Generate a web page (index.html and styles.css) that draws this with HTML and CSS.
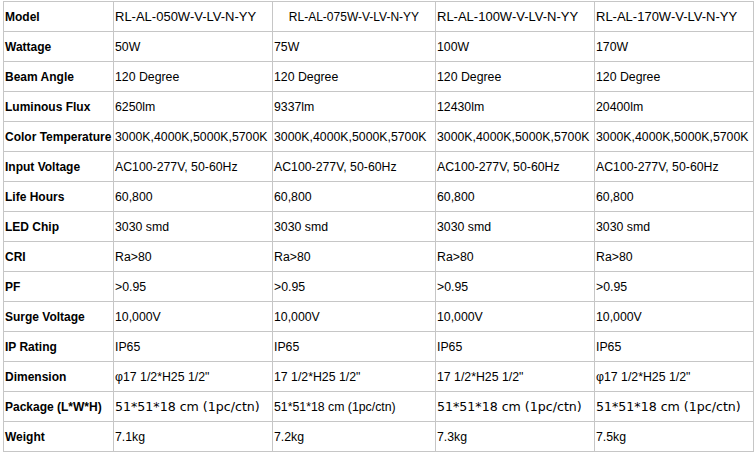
FILE: index.html
```html
<!DOCTYPE html>
<html>
<head>
<meta charset="utf-8">
<link rel="stylesheet" href="styles.css">
</head>
<body>
<table class="spec">
<colgroup>
<col class="c0"><col class="c1"><col class="c2"><col class="c3"><col class="c4">
</colgroup>
<tbody>
<tr><th>Model</th><td class="hd">RL-AL-050W-V-LV-N-YY</td><td class="hd2">RL-AL-075W-V-LV-N-YY</td><td class="hd">RL-AL-100W-V-LV-N-YY</td><td class="hd">RL-AL-170W-V-LV-N-YY</td></tr>
<tr><th>Wattage</th><td>50W</td><td>75W</td><td>100W</td><td>170W</td></tr>
<tr><th>Beam Angle</th><td>120 Degree</td><td>120 Degree</td><td>120 Degree</td><td>120 Degree</td></tr>
<tr><th>Luminous Flux</th><td>6250lm</td><td>9337lm</td><td>12430lm</td><td>20400lm</td></tr>
<tr><th>Color Temperature</th><td>3000K,4000K,5000K,5700K</td><td>3000K,4000K,5000K,5700K</td><td>3000K,4000K,5000K,5700K</td><td>3000K,4000K,5000K,5700K</td></tr>
<tr><th>Input Voltage</th><td>AC100-277V, 50-60Hz</td><td>AC100-277V, 50-60Hz</td><td>AC100-277V, 50-60Hz</td><td>AC100-277V, 50-60Hz</td></tr>
<tr><th>Life Hours</th><td>60,800</td><td>60,800</td><td>60,800</td><td>60,800</td></tr>
<tr><th>LED Chip</th><td>3030 smd</td><td>3030 smd</td><td>3030 smd</td><td>3030 smd</td></tr>
<tr><th>CRI</th><td>Ra&gt;80</td><td>Ra&gt;80</td><td>Ra&gt;80</td><td>Ra&gt;80</td></tr>
<tr><th>PF</th><td>&gt;0.95</td><td>&gt;0.95</td><td>&gt;0.95</td><td>&gt;0.95</td></tr>
<tr><th>Surge Voltage</th><td>10,000V</td><td>10,000V</td><td>10,000V</td><td>10,000V</td></tr>
<tr><th>IP Rating</th><td>IP65</td><td>IP65</td><td>IP65</td><td>IP65</td></tr>
<tr><th>Dimension</th><td>φ17 1/2*H25 1/2"</td><td>17 1/2*H25 1/2"</td><td>17 1/2*H25 1/2"</td><td>φ17 1/2*H25 1/2"</td></tr>
<tr><th>Package (L*W*H)</th><td class="wide">51*51*18 cm (1pc/ctn)</td><td>51*51*18 cm (1pc/ctn)</td><td class="wide">51*51*18 cm (1pc/ctn)</td><td class="wide">51*51*18 cm (1pc/ctn)</td></tr>
<tr><th>Weight</th><td>7.1kg</td><td>7.2kg</td><td>7.3kg</td><td>7.5kg</td></tr>
</tbody>
</table>
</body>
</html>
```
FILE: styles.css
```css
html, body {
  margin: 0;
  padding: 0;
  background: #ffffff;
}
body {
  padding: 1px 0 0 3px;
  font-family: "Liberation Sans", Arial, sans-serif;
  font-size: 12px;
  color: #000;
}
.spec {
  border-collapse: collapse;
  table-layout: fixed;
  width: 751px;
}
.c0 { width: 110px; }
.c1 { width: 159px; }
.c2 { width: 163px; }
.c3 { width: 159px; }
.c4 { width: 159px; }
.spec th,
.spec td {
  border: 1px solid #c6c6c6;
  height: 29px;
  padding: 0 1px;
  vertical-align: middle;
  text-align: left;
  white-space: nowrap;
  overflow: hidden;
  font-size: 12.3px;
  line-height: 14px;
}
.spec th {
  font-weight: bold;
  font-size: 12px;
}
.spec td.hd {
  font-size: 13px;
}
.spec td.hd2 {
  text-align: center;
  font-size: 12px;
}
.spec td.wide {
  font-family: "DejaVu Sans", sans-serif;
  font-size: 12.6px;
}
```
